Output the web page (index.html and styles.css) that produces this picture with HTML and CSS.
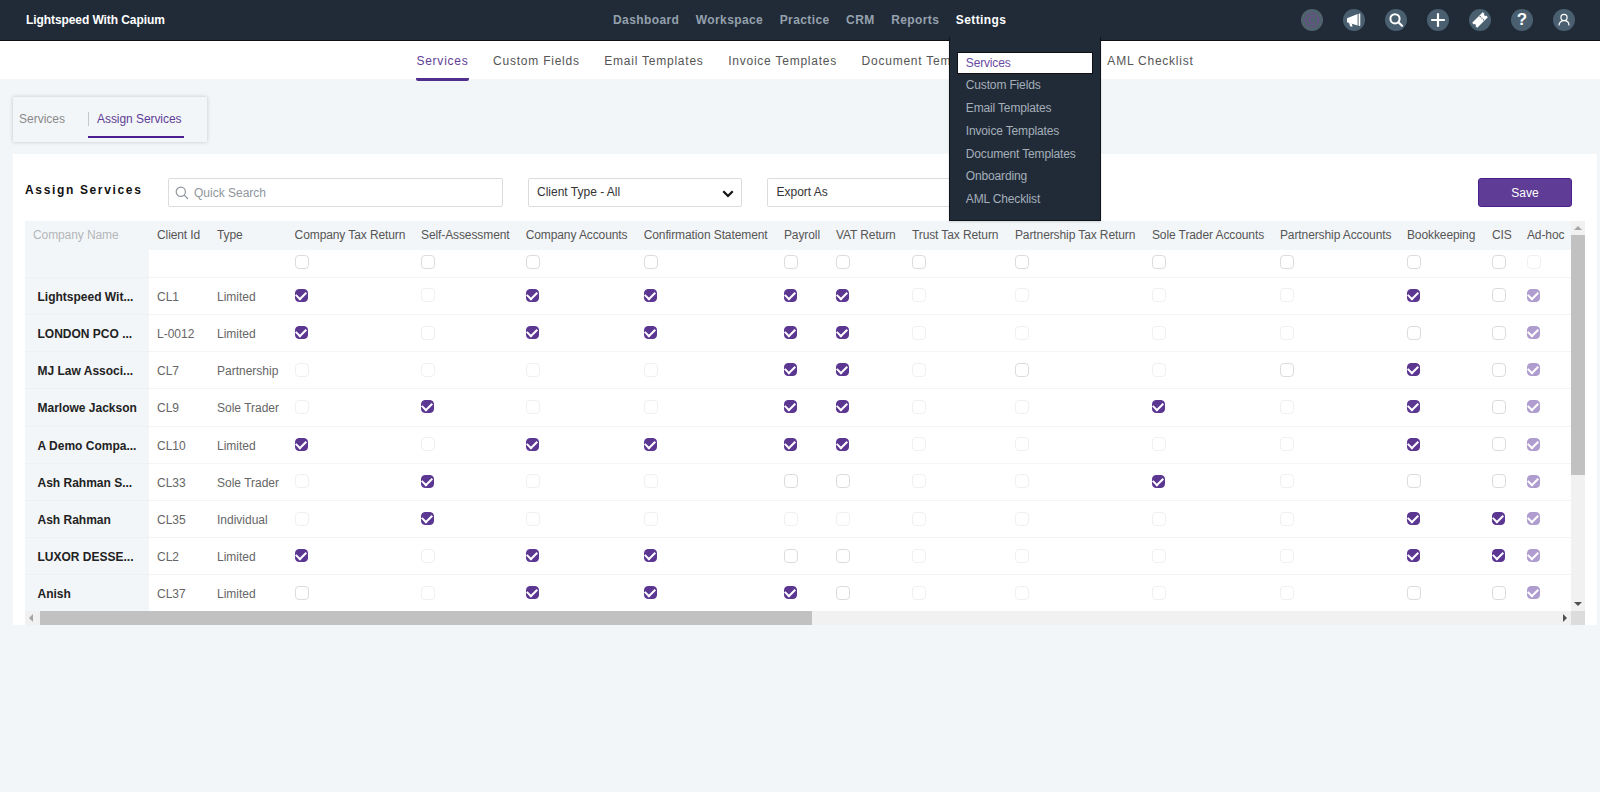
FILE: index.html
```html
<!DOCTYPE html>
<html lang="en">
<head>
<meta charset="utf-8">
<title>Assign Services</title>
<link rel="stylesheet" href="styles.css">
</head>
<body>
<header class="topbar">
  <div class="logo">Lightspeed With Capium</div>
  <nav class="mainnav">
    <a>Dashboard</a><a>Workspace</a><a>Practice</a><a>CRM</a><a>Reports</a>
    <div class="mainnav-open">
      <a class="current">Settings</a>
      <ul class="menu">
        <li class="menu-active">Services</li>
        <li>Custom Fields</li>
        <li>Email Templates</li>
        <li>Invoice Templates</li>
        <li>Document Templates</li>
        <li>Onboarding</li>
        <li>AML Checklist</li>
      </ul>
    </div>
  </nav>
  <div class="actions">
    <span class="round round-muted"><svg viewBox="0 0 22 22"><circle cx="11" cy="11" r="6.5" fill="none" stroke="#7a3f9e" stroke-width="1" stroke-dasharray="5 1"/><path d="M13.2 9.2a2.8 2.8 0 1 0 0 3.6" fill="none" stroke="#7a3f9e" stroke-width="1"/></svg></span>
    <span class="round"><svg viewBox="0 0 22 22"><path d="M4 9.2 14.6 5v11.6L4 13.2z" fill="#fff"/><path d="M6 13.4 8.8 14.4 9.6 17.6 7.2 17.6z" fill="#fff"/><rect x="15.6" y="4.6" width="1.7" height="12.4" rx=".8" fill="#fff"/></svg></span>
    <span class="round"><svg viewBox="0 0 22 22"><circle cx="10" cy="9.8" r="4.6" fill="none" stroke="#fff" stroke-width="2"/><path d="m13.4 13.2 3.6 3.6" stroke="#fff" stroke-width="2.2" stroke-linecap="round"/></svg></span>
    <span class="round"><svg viewBox="0 0 22 22"><path d="M11 5v12M5 11h12" stroke="#fff" stroke-width="2.2" stroke-linecap="round"/></svg></span>
    <span class="round"><svg viewBox="0 0 22 22"><g transform="rotate(-45 11 11)"><path d="M3.5 7.4h15v2.4a1.2 1.2 0 0 0 0 2.4v2.4h-15v-2.4a1.2 1.2 0 0 0 0-2.4z" fill="#fff"/><path d="M13.6 8v6" stroke="#4a6070" stroke-width="1" stroke-dasharray="1.4 1"/></g></svg></span>
    <span class="round round-text">?</span>
    <span class="round"><svg viewBox="0 0 22 22"><circle cx="11" cy="8.4" r="3.1" fill="none" stroke="#fff" stroke-width="1.2"/><path d="M6 16.4c0-2.9 2.2-4.7 5-4.7s5 1.8 5 4.7" fill="none" stroke="#fff" stroke-width="1.2"/></svg></span>
  </div>
</header>

<nav class="subnav">
  <a class="subnav-active">Services</a><a>Custom Fields</a><a>Email Templates</a><a>Invoice Templates</a><a>Document Templates</a><a>Onboarding</a><a>AML Checklist</a>
</nav>

<main class="page">
  <div class="tabs">
    <a class="tab">Services</a>
    <a class="tab tab-active">Assign Services</a>
  </div>

  <section class="card">
    <div class="toolbar">
      <h1 class="title">Assign Services</h1>
      <label class="search">
        <svg viewBox="0 0 14 14" class="search-icon"><circle cx="5.8" cy="5.8" r="4.6" fill="none" stroke="#8f969c" stroke-width="1.2"/><path d="m9.2 9.2 3.8 3.8" stroke="#8f969c" stroke-width="1.2"/></svg>
        <span>Quick Search</span>
      </label>
      <div class="select select-client"><span>Client Type - All</span>
        <svg viewBox="0 0 12 8" class="chev"><path d="M1.3 1.3 6 6l4.7-4.7" fill="none" stroke="#111" stroke-width="2.2"/></svg>
      </div>
      <div class="select select-export"><span>Export As</span></div>
      <button class="save">Save</button>
    </div>

    <div class="grid">
      <div class="grid-clip">
        <table class="services">
          <colgroup>
            <col class="c-name"><col class="c-id"><col class="c-type"><col class="c-ctr"><col class="c-sa"><col class="c-ca"><col class="c-cs"><col class="c-pay"><col class="c-vat"><col class="c-trust"><col class="c-ptr"><col class="c-sta"><col class="c-pa"><col class="c-bk"><col class="c-cis"><col class="c-adhoc">
          </colgroup>
          <thead>
            <tr>
              <th class="name-head">Company Name</th><th>Client Id</th><th>Type</th><th>Company Tax Return</th><th>Self-Assessment</th><th>Company Accounts</th><th>Confirmation Statement</th><th>Payroll</th><th>VAT Return</th><th>Trust Tax Return</th><th>Partnership Tax Return</th><th>Sole Trader Accounts</th><th>Partnership Accounts</th><th>Bookkeeping</th><th>CIS</th><th>Ad-hoc</th>
            </tr>
          </thead>
          <tbody>
            <tr class="filter">
              <td class="name"></td><td></td><td></td>
              <td><i class="cb"></i></td><td><i class="cb"></i></td><td><i class="cb"></i></td><td><i class="cb"></i></td><td><i class="cb"></i></td><td><i class="cb"></i></td><td><i class="cb"></i></td><td><i class="cb"></i></td><td><i class="cb"></i></td><td><i class="cb"></i></td><td><i class="cb"></i></td><td><i class="cb"></i></td><td><i class="cb off"></i></td>
            </tr>
            <tr>
              <td class="name">Lightspeed Wit...</td><td>CL1</td><td>Limited</td>
              <td><i class="cb on"></i></td><td><i class="cb off"></i></td><td><i class="cb on"></i></td><td><i class="cb on"></i></td><td><i class="cb on"></i></td><td><i class="cb on"></i></td><td><i class="cb off"></i></td><td><i class="cb off"></i></td><td><i class="cb off"></i></td><td><i class="cb off"></i></td><td><i class="cb on"></i></td><td><i class="cb"></i></td><td><i class="cb lock"></i></td>
            </tr>
            <tr>
              <td class="name">LONDON PCO ...</td><td>L-0012</td><td>Limited</td>
              <td><i class="cb on"></i></td><td><i class="cb off"></i></td><td><i class="cb on"></i></td><td><i class="cb on"></i></td><td><i class="cb on"></i></td><td><i class="cb on"></i></td><td><i class="cb off"></i></td><td><i class="cb off"></i></td><td><i class="cb off"></i></td><td><i class="cb off"></i></td><td><i class="cb"></i></td><td><i class="cb"></i></td><td><i class="cb lock"></i></td>
            </tr>
            <tr>
              <td class="name">MJ Law Associ...</td><td>CL7</td><td>Partnership</td>
              <td><i class="cb off"></i></td><td><i class="cb off"></i></td><td><i class="cb off"></i></td><td><i class="cb off"></i></td><td><i class="cb on"></i></td><td><i class="cb on"></i></td><td><i class="cb off"></i></td><td><i class="cb"></i></td><td><i class="cb off"></i></td><td><i class="cb"></i></td><td><i class="cb on"></i></td><td><i class="cb"></i></td><td><i class="cb lock"></i></td>
            </tr>
            <tr>
              <td class="name">Marlowe Jackson</td><td>CL9</td><td>Sole Trader</td>
              <td><i class="cb off"></i></td><td><i class="cb on"></i></td><td><i class="cb off"></i></td><td><i class="cb off"></i></td><td><i class="cb on"></i></td><td><i class="cb on"></i></td><td><i class="cb off"></i></td><td><i class="cb off"></i></td><td><i class="cb on"></i></td><td><i class="cb off"></i></td><td><i class="cb on"></i></td><td><i class="cb"></i></td><td><i class="cb lock"></i></td>
            </tr>
            <tr>
              <td class="name">A Demo Compa...</td><td>CL10</td><td>Limited</td>
              <td><i class="cb on"></i></td><td><i class="cb off"></i></td><td><i class="cb on"></i></td><td><i class="cb on"></i></td><td><i class="cb on"></i></td><td><i class="cb on"></i></td><td><i class="cb off"></i></td><td><i class="cb off"></i></td><td><i class="cb off"></i></td><td><i class="cb off"></i></td><td><i class="cb on"></i></td><td><i class="cb"></i></td><td><i class="cb lock"></i></td>
            </tr>
            <tr>
              <td class="name">Ash Rahman S...</td><td>CL33</td><td>Sole Trader</td>
              <td><i class="cb off"></i></td><td><i class="cb on"></i></td><td><i class="cb off"></i></td><td><i class="cb off"></i></td><td><i class="cb"></i></td><td><i class="cb"></i></td><td><i class="cb off"></i></td><td><i class="cb off"></i></td><td><i class="cb on"></i></td><td><i class="cb off"></i></td><td><i class="cb"></i></td><td><i class="cb"></i></td><td><i class="cb lock"></i></td>
            </tr>
            <tr>
              <td class="name">Ash Rahman</td><td>CL35</td><td>Individual</td>
              <td><i class="cb off"></i></td><td><i class="cb on"></i></td><td><i class="cb off"></i></td><td><i class="cb off"></i></td><td><i class="cb off"></i></td><td><i class="cb off"></i></td><td><i class="cb off"></i></td><td><i class="cb off"></i></td><td><i class="cb off"></i></td><td><i class="cb off"></i></td><td><i class="cb on"></i></td><td><i class="cb on"></i></td><td><i class="cb lock"></i></td>
            </tr>
            <tr>
              <td class="name">LUXOR DESSE...</td><td>CL2</td><td>Limited</td>
              <td><i class="cb on"></i></td><td><i class="cb off"></i></td><td><i class="cb on"></i></td><td><i class="cb on"></i></td><td><i class="cb"></i></td><td><i class="cb"></i></td><td><i class="cb off"></i></td><td><i class="cb off"></i></td><td><i class="cb off"></i></td><td><i class="cb off"></i></td><td><i class="cb on"></i></td><td><i class="cb on"></i></td><td><i class="cb lock"></i></td>
            </tr>
            <tr>
              <td class="name">Anish</td><td>CL37</td><td>Limited</td>
              <td><i class="cb"></i></td><td><i class="cb off"></i></td><td><i class="cb on"></i></td><td><i class="cb on"></i></td><td><i class="cb on"></i></td><td><i class="cb"></i></td><td><i class="cb off"></i></td><td><i class="cb off"></i></td><td><i class="cb off"></i></td><td><i class="cb off"></i></td><td><i class="cb"></i></td><td><i class="cb"></i></td><td><i class="cb lock"></i></td>
            </tr>
          </tbody>
        </table>
      </div>
      <div class="vbar"><i class="arrow arrow-up"></i><i class="vthumb"></i><i class="arrow arrow-down"></i></div>
      <div class="hbar"><i class="arrow arrow-left"></i><i class="hthumb"></i><i class="arrow arrow-right"></i></div>
      <div class="corner"></div>
    </div>
  </section>
</main>
</body>
</html>
```
FILE: styles.css
```css
* { box-sizing: border-box; }
html, body { margin: 0; height: 100%; }
body {
  background: #f3f6f9;
  font-family: "Liberation Sans", Arial, sans-serif;
  font-size: 12px;
  color: #555;
  overflow: hidden;
}

/* top bar */
.topbar {
  height: 41px;
  background: #212b38;
  border-bottom: 1px solid #0d1014;
  display: flex;
  align-items: center;
  padding: 0 0 1px 26px;
}
.logo { width: 138px; color: #fff; font-weight: 700; font-size: 12px; letter-spacing: -.08px; white-space: nowrap; }
.mainnav { display: flex; align-items: center; gap: 16.5px; margin-left: 449px; font-size: 12px; font-weight: 700; letter-spacing: .4px; color: #95a1ad; }
.mainnav-open { position: relative; }
.current { color: #fff; }
.menu {
  position: absolute;
  z-index: 5;
  top: 24px;
  left: -7px;
  width: 152px;
  height: 184px;
  margin: 0;
  padding: 15px 7px 0;
  list-style: none;
  background: #212b38;
  border: 1px solid #10151b;
  border-top: 0;
  color: #a5afb9;
  font-weight: 400;
  letter-spacing: -.15px;
  box-shadow: 0 1px 2px rgba(0,0,0,.15);
}
.menu li { height: 22.8px; line-height: 22.8px; padding-left: 9px; white-space: nowrap; }
.menu .menu-active { background: #fff; color: #6a4aa3; border: 1px solid #0d1014; padding-left: 8px; line-height: 20.8px; }
.actions { display: flex; gap: 20px; margin-left: auto; padding-right: 25px; }
.round {
  width: 22px;
  height: 22px;
  border-radius: 50%;
  background: #4a6070;
  display: flex;
  align-items: center;
  justify-content: center;
}
.round svg { width: 22px; height: 22px; display: block; }
.round-muted { background: #51626f; }
.round-text { color: #fff; font-weight: 700; font-size: 17px; }

/* sub navigation */
.subnav {
  height: 38px;
  background: #fff;
  display: flex;
  justify-content: center;
  gap: 24.5px;
  padding-left: 10px;
  letter-spacing: .77px;
  color: #555;
}
.subnav a { padding-top: 1px; line-height: 38px; height: 39.5px; white-space: nowrap; }
.subnav-active { color: #5f3d96; border-bottom: 3px solid #512f8f; border-radius: 0 0 2px 2px; }

/* page */
.page { padding: 18px 3px 0 13px; }
.tabs {
  width: 194px;
  height: 45px;
  background: #f3f6f9;
  box-shadow: 0 0 4px rgba(0,0,0,.2);
  display: flex;
  align-items: stretch;
}
.tab { padding: 0 4px 0 6px; line-height: 44px; color: #8a8a8a; width: 75px; white-space: nowrap; }
.tab-active {
  position: relative;
  width: 96px;
  color: #5f3d96;
  padding-left: 9px;
  height: 41px;
  letter-spacing: -.06px;
  border-bottom: 2px solid #4b1f8f;
}
.tab-active::before {
  content: "";
  position: absolute;
  left: 0;
  top: 15px;
  width: 1px;
  height: 14px;
  background: #c8c8c8;
}

.card { margin-top: 12px; background: #fff; height: 471px; padding: 24px 12px 0; }
.toolbar { display: flex; align-items: center; height: 29px; }
.title { margin: 0 0 6px; width: 143px; font-size: 12px; font-weight: 700; letter-spacing: 1.65px; color: #111; }
.search, .select {
  height: 29px;
  background: #fff;
  border: 1px solid #dcdcdc;
  border-radius: 2px;
  display: flex;
  align-items: center;
}
.search { width: 335px; padding-left: 6px; gap: 5px; color: #8f969c; font-weight: 400; }
.search-icon { width: 14px; height: 14px; }
.select { margin-left: 25px; padding: 0 7px 2px 8px; justify-content: space-between; color: #333; }
.select-client { width: 214px; }
.select-export { width: 214px; padding-left: 8.5px; }
.chev { width: 12px; height: 8px; margin-top: 4px; }
.save {
  margin: 0 13px 0 auto;
  width: 94px;
  height: 29px;
  background: #5f3d96;
  border: 1px solid #4b1f8f;
  border-radius: 3px;
  color: #fff;
  font: 400 12px "Liberation Sans", Arial, sans-serif;
}

/* table */
.grid {
  margin-top: 14px;
  display: grid;
  grid-template-columns: 1546px 14px;
  grid-template-rows: 390px 14px;
}
.grid-clip { overflow: hidden; }
.services { border-collapse: collapse; table-layout: fixed; width: 1546px; }
.c-name { width: 124px; } .c-id { width: 60px; } .c-type { width: 77.6px; } .c-ctr { width: 126.4px; }
.c-sa { width: 104.7px; } .c-ca { width: 118px; } .c-cs { width: 140.3px; } .c-pay { width: 52px; }
.c-vat { width: 76px; } .c-trust { width: 103px; } .c-ptr { width: 137px; } .c-sta { width: 128px; }
.c-pa { width: 127px; } .c-bk { width: 85px; } .c-cis { width: 35px; } .c-adhoc { width: 53px; }
.services th {
  height: 29px;
  padding: 0 0 1px 8px;
  background: #f3f6f9;
  font-weight: 400;
  letter-spacing: -.1px;
  text-align: left;
  color: #555;
  white-space: nowrap;
  overflow: hidden;
}
.services .name-head { color: #b4b7ba; }
.services td {
  height: 37.2px;
  padding: 2px 0 0 8px;
  border-bottom: 1px solid #f3f4f6;
  color: #666;
  white-space: nowrap;
}
.services .filter td { height: 27.3px; padding-top: 0; }
.services .name {
  padding-left: 12.5px;
  background: #f3f6f9;
  border-bottom-color: #eef1f4;
  font-weight: 700;
  color: #222;
}
.cb {
  display: flex;
  align-items: center;
  justify-content: center;
  width: 14px;
  height: 14px;
  margin-top: -3px;
  border: 1px solid #dcdcdc;
  border-radius: 4px;
  background: #fff;
}
.filter .cb { margin-top: -2px; }
.off { border-color: #f0f0f0; }
.on { background: #5c3792; border-color: #5c3792; }
.lock { background: #b09dcf; border-color: #b09dcf; }
.on, .lock { width: 13px; height: 13px; }
.on::after, .lock::after {
  content: "";
  width: 8px;
  height: 5px;
  margin-top: -2px;
  border-left: 2px solid #fff;
  border-bottom: 2px solid #fff;
  transform: rotate(-45deg);
}

/* scrollbars */
.vbar { background: #f1f1f1; display: flex; flex-direction: column; align-items: center; justify-content: space-between; }
.hbar { background: #f1f1f1; display: flex; align-items: center; padding: 0 4px; }
.corner { background: #dcdcdc; }
.vthumb { display: block; width: 100%; height: 240px; background: #c1c1c1; margin-bottom: auto; }
.hthumb { display: block; width: 772px; height: 100%; background: #c1c1c1; margin-left: 7px; margin-right: auto; }
.arrow { display: block; width: 0; height: 0; border: 4px solid transparent; }
.arrow-up { border-bottom-color: #a6a6a6; border-top-width: 0; margin: 5px 0 5px; }
.arrow-down { border-top-color: #505050; border-bottom-width: 0; margin-bottom: 5px; }
.arrow-left { border-right-color: #a6a6a6; border-left-width: 0; }
.arrow-right { border-left-color: #505050; border-right-width: 0; }
```
